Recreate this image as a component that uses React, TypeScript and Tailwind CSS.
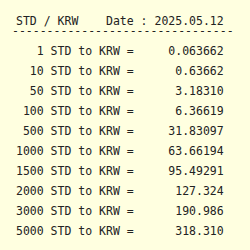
export default function App() {
  const rows: [string, string][] = [
    ["1", "0.063662"],
    ["10", "0.63662"],
    ["50", "3.18310"],
    ["100", "6.36619"],
    ["500", "31.83097"],
    ["1000", "63.66194"],
    ["1500", "95.49291"],
    ["2000", "127.324"],
    ["3000", "190.986"],
    ["5000", "318.310"],
  ];
  return (
    <div
      className="w-[250px] h-[250px] bg-[#ffffe0] text-[#222222] text-[11.5px] pt-[14px]"
      style={{ fontFamily: '"DejaVu Sans Mono", monospace' }}
    >
      <div className="pl-[16px] leading-[14px] h-[14px] whitespace-pre">{"STD / KRW    Date : 2025.05.12"}</div>
      <div className="pl-[12px] leading-[6px] h-[6px] whitespace-pre">{"--------------------------------"}</div>
      <div className="flex flex-col mt-[7px]">
        {rows.map(([a, v]) => (
          <div key={a} className="pl-[16px] leading-[20px] h-[20px] whitespace-pre">
            {a.padStart(4, " ") + " STD to KRW = " + v.padStart(12, " ")}
          </div>
        ))}
      </div>
    </div>
  );
}
